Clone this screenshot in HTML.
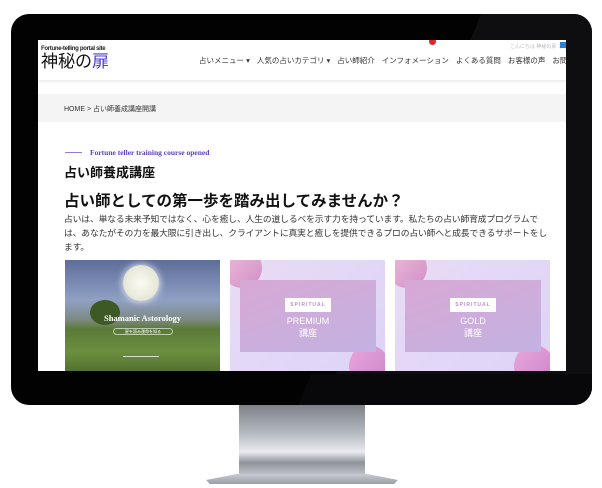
<!DOCTYPE html>
<html><head><meta charset="utf-8"><style>
*{margin:0;padding:0;box-sizing:border-box}
body{width:602px;height:488px;background:#fff;position:relative;overflow:hidden;font-family:"Liberation Sans","Noto Sans CJK JP",sans-serif;color:#222}
.bezel{position:absolute;left:11px;top:14px;width:581px;height:391px;background:#020203;border-radius:18px;overflow:hidden}
.gloss{position:absolute;top:0;width:400px;height:420px;background:#0e0e10;transform:skewX(-22deg);transform-origin:0 0;left:470px}
.gloss2{position:absolute;top:360px;width:400px;height:40px;background:#08080a;transform:skewX(-22deg);transform-origin:0 0;left:300px}
.screen{position:absolute;left:38px;top:40px;width:528px;height:331px;background:#fff;overflow:hidden}
.abs{position:absolute}
.stand{position:absolute;left:239px;top:405px;width:126px;height:72px;background:linear-gradient(#7d8188,#b7bbc2 40%,#e9ebf0 65%,#8f939a 80%,#c8cbd0);clip-path:polygon(0 0,100% 0,102% 78%,100% 100%,0 100%,-2% 78%)}
.base{position:absolute;left:206px;top:474px;width:192px;height:10px;background:linear-gradient(#c9ccd1,#9a9ea5);clip-path:polygon(16% 0,84% 0,100% 60%,98% 100%,2% 100%,0 60%);border-radius:2px}
.nav span{margin-right:7px}
.card{position:absolute;top:220px;width:155px;height:115px;background:linear-gradient(135deg,#e8dcf5,#ddd3f6);overflow:hidden}
.inner{position:absolute;left:10px;top:20px;width:136px;height:72px;background:linear-gradient(160deg,#d8a8d4,#c2b2e2);text-align:center;color:#fff;font-size:9px;line-height:12px;padding-top:17px}
.tag{display:inline-block;background:#fff;color:#c38ccf;font-size:5px;font-weight:bold;letter-spacing:1px;padding:1px 5px;margin-bottom:3px}
.blob1{position:absolute;left:-8px;top:-12px;width:40px;height:40px;border-radius:50%;background:linear-gradient(135deg,#f2c0d8,#cf8ec8)}
.blob2{position:absolute;right:-4px;bottom:-12px;width:40px;height:42px;border-radius:50%;background:linear-gradient(135deg,#eaa8dd,#c982c6)}
</style></head><body>
<div class="bezel"><div class="gloss"></div><div class="gloss2"></div></div>
<div class="stand"></div><div class="base"></div>
<div class="screen">
  <div class="abs" style="left:0;top:0;width:528px;height:40px;background:#fff;box-shadow:0 2px 3px rgba(0,0,0,.08)"></div>
  <div class="abs" style="left:3px;top:6px;font-size:6px;font-weight:bold;letter-spacing:-.3px">Fortune-telling portal site</div>
  <div class="abs" style="left:3px;top:13px;font-size:17px;line-height:18px;color:#111">神秘の<span style="color:#4b3bd0">扉</span></div>
  <div class="abs" style="left:391px;top:-2px;width:7px;height:7px;border-radius:50%;background:#e0242c"></div>
  <div class="abs" style="left:472px;top:3px;font-size:5px;color:#bbb;white-space:nowrap">こんにちは 神秘の扉 さん</div>
  <div class="abs" style="left:522px;top:2px;width:6px;height:6px;background:#2a7fd0"></div>
  <div class="abs nav" style="left:161px;top:15px;font-size:7.5px;color:#333;white-space:nowrap"><span>占いメニュー ▾</span><span>人気の占いカテゴリ ▾</span><span>占い師紹介</span><span>インフォメーション</span><span>よくある質問</span><span>お客様の声</span><span>お問い合わせ</span></div>
  <div class="abs" style="left:0;top:54px;width:528px;height:28px;background:#f4f4f5"></div>
  <div class="abs" style="left:26px;top:64px;font-size:7px;color:#333">HOME &gt; 占い師養成講座開講</div>
  <div class="abs" style="left:27px;top:112px;width:17px;height:1px;background:#8f7ee0"></div>
  <div class="abs" style="left:52px;top:108px;font-size:7.5px;font-weight:bold;color:#5a3fc0;font-family:'Liberation Serif',serif">Fortune teller training course opened</div>
  <div class="abs" style="left:26px;top:122px;font-size:13px;font-weight:bold;color:#111">占い師養成講座</div>
  <div class="abs" style="left:26px;top:149px;font-size:15.5px;font-weight:bold;color:#111">占い師としての第一歩を踏み出してみませんか？</div>
  <div class="abs" style="left:26px;top:172px;width:490px;font-size:8.8px;line-height:14px;color:#333;letter-spacing:-.15px">占いは、単なる未来予知ではなく、心を癒し、人生の道しるべを示す力を持っています。私たちの占い師育成プログラムでは、あなたがその力を最大限に引き出し、クライアントに真実と癒しを提供できるプロの占い師へと成長できるサポートをします。</div>
  <div class="abs" style="left:27px;top:220px;width:155px;height:115px;background:linear-gradient(#5d6d9a 0%,#8fa0c4 35%,#7c8a80 52%,#5a7a38 60%,#6c8f3e 80%,#4e6b2e);overflow:hidden">
    <div class="abs" style="left:58px;top:5px;width:36px;height:36px;border-radius:50%;background:radial-gradient(#fbfbf2,#dcdccc);box-shadow:0 0 8px #fff"></div>
    <div class="abs" style="left:25px;top:40px;width:30px;height:25px;border-radius:50%;background:#3d5a24"></div>
    <div class="abs" style="left:0;top:53px;width:155px;text-align:center;color:#fff;font-family:'Liberation Serif',serif;font-size:8.5px;font-weight:bold">Shamanic Astorology</div>
    <div class="abs" style="left:48px;top:68px;width:60px;height:7px;border:1px solid rgba(255,255,255,.6);border-radius:4px;font-size:4px;color:#fff;text-align:center;line-height:5px">星を読み運命を知る</div>
    <div class="abs" style="left:58px;top:96px;width:36px;height:1px;background:#ddd"></div>
  </div>
  <div class="card" style="left:192px"><div class="blob1"></div><div class="blob2"></div><div class="inner"><span class="tag">SPIRITUAL</span><br>PREMIUM<br>講座</div></div>
  <div class="card" style="left:357px"><div class="blob1"></div><div class="blob2"></div><div class="inner"><span class="tag">SPIRITUAL</span><br>GOLD<br>講座</div></div>
</div>
</body></html>
